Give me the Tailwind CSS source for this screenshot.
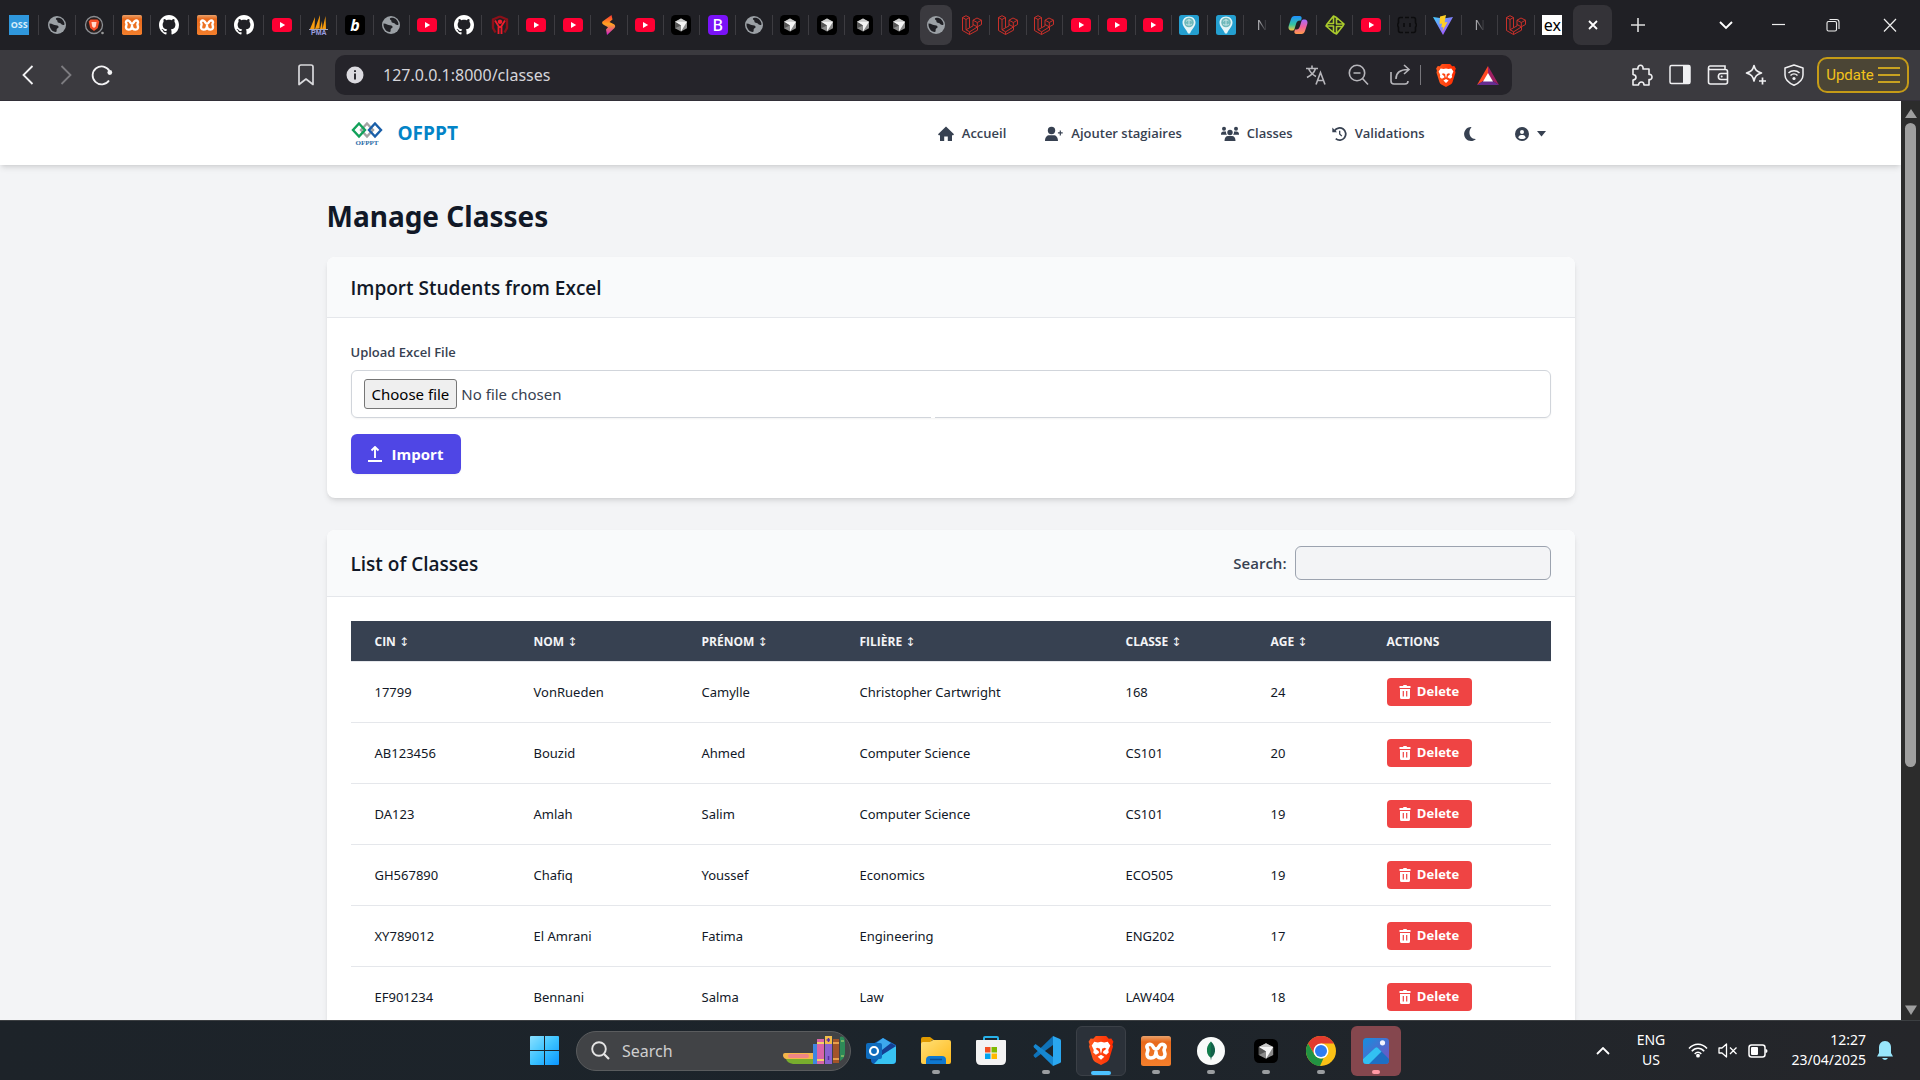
<!DOCTYPE html>
<html lang="en">
<head>
<meta charset="utf-8">
<meta name="viewport" content="width=device-width, initial-scale=1">
<title>Manage Classes</title>
<script src="https://cdn.jsdelivr.net/npm/@tailwindcss/browser@4"></script>
</head>
<body class="flex h-screen flex-col overflow-hidden bg-[#202025] font-['Noto_Sans','Open_Sans',sans-serif] text-[#111827]">

<svg class="absolute size-0" aria-hidden="true">
  <defs>
    <linearGradient id="gFlame" x1="0" y1="0" x2="0" y2="1"><stop offset="0" stop-color="#f33"/><stop offset=".45" stop-color="#ffa51f"/><stop offset="1" stop-color="#d11ad1"/></linearGradient>
    <linearGradient id="gVite" x1="0" y1="0" x2="1" y2="1"><stop offset="0" stop-color="#41d1ff"/><stop offset="1" stop-color="#bd34fe"/></linearGradient>
    <linearGradient id="gCopA" x1="0" y1="0" x2="0" y2="1"><stop offset="0" stop-color="#1e90ff"/><stop offset=".6" stop-color="#35c5a0"/><stop offset="1" stop-color="#f5c842"/></linearGradient>
    <linearGradient id="gCopB" x1="0" y1="0" x2="0" y2="1"><stop offset="0" stop-color="#a46bff"/><stop offset=".5" stop-color="#f0609e"/><stop offset="1" stop-color="#ff9a4a"/></linearGradient>
    <linearGradient id="gWin" x1="0" y1="0" x2="1" y2="1"><stop offset="0" stop-color="#8be0ff"/><stop offset=".5" stop-color="#3cc3ff"/><stop offset="1" stop-color="#0a95ff"/></linearGradient>
    <linearGradient id="gBrave" x1="0" y1="0" x2="1" y2="0"><stop offset="0" stop-color="#ff5b1f"/><stop offset="1" stop-color="#ff2a00"/></linearGradient>
    <linearGradient id="gFolder" x1="0" y1="0" x2="1" y2="1"><stop offset="0" stop-color="#ffe078"/><stop offset="1" stop-color="#ffb91a"/></linearGradient>
    <linearGradient id="gPhoto" x1="0" y1="0" x2="1" y2="1"><stop offset="0" stop-color="#1490df"/><stop offset="1" stop-color="#7a4fc0"/></linearGradient>
    <linearGradient id="gXampp" x1="0" y1="0" x2="0" y2="1"><stop offset="0" stop-color="#e8a26c"/><stop offset=".2" stop-color="#e8691c"/><stop offset="1" stop-color="#f47f2c"/></linearGradient>
    <symbol id="globe" viewBox="0 0 20 20"><circle cx="10" cy="10" r="9" fill="currentColor"/><path d="M2.500 8.500c3 .2 4.500 1.600 6.500 1.800 1.500.2 2.800.7 2.600 2-.2 1-1.600.9-1.900 2-.2 1 .3 2.200-.7 2.600C5 17 2.200 13 2.500 8.500ZM9.500 3c2-.6 4-.1 5.500 1.200 1.600 1.400 2.500 3.400 2.500 5.300-1.200 1-2.800.4-3.500-.7-.6-1-2-.6-3-1.300-.9-.6-.2-1.700-1-2.300C9 4.500 8.300 3.500 9.500 3Z" fill="#202025"/></symbol>
    <symbol id="yt" viewBox="0 0 20 20"><rect x="0" y="3" width="20" height="14" rx="3.500" fill="#ff0033"/><path d="M8 7l5.200 3L8 13Z" fill="#fff"/></symbol>
    <symbol id="gh" viewBox="0 0 16 16"><path fill="#fff" d="M8 0C3.580 0 0 3.580 0 8c0 3.540 2.290 6.530 5.470 7.590.4.070.55-.17.55-.38 0-.19-.01-.82-.01-1.490-2.010.37-2.530-.49-2.690-.94-.09-.23-.48-.94-.82-1.130-.28-.15-.68-.52-.01-.53.63-.01 1.080.58 1.230.82.72 1.210 1.870.87 2.330.66.070-.52.28-.87.51-1.070-1.780-.2-3.640-.89-3.640-3.950 0-.87.31-1.590.82-2.150-.08-.2-.36-1.020.08-2.120 0 0 .67-.21 2.200.82.64-.18 1.320-.27 2-.27s1.360.09 2 .27c1.530-1.040 2.200-.82 2.200-.82.44 1.100.16 1.920.08 2.120.51.56.82 1.270.82 2.150 0 3.070-1.870 3.750-3.650 3.950.29.25.54.73.54 1.480 0 1.070-.01 1.930-.01 2.200 0 .21.15.46.55.38A8.010 8.010 0 0 0 16 8c0-4.420-3.580-8-8-8Z"/></symbol>
    <symbol id="xampp" viewBox="0 0 30 30"><rect width="30" height="30" rx="2.500" fill="url(#gXampp)"/><path d="M9.800 8.500c-3.200-.8-4.800 1.800-3.300 4 .6 1 .6 1.800.1 3-1.700 4 .2 6.500 3.200 6.500 3.400 0 5.200-2.200 5.200-6M20.200 8.500c3.200-.8 4.800 1.800 3.300 4-.6 1-.6 1.800-.1 3 1.700 4-.2 6.500-3.200 6.500-3.400 0-5.200-2.200-5.200-6M9.800 8.500c2.700.5 2 4.500 5.200 4.500s2.500-4 5.200-4.500" fill="none" stroke="#fff" stroke-width="3.600" stroke-linecap="round"/></symbol>
    <symbol id="brave" viewBox="0 0 24 28"><path d="M7 0h10l2.500 2.600L22 2.400l2 3.100-1 2.700.6 2L20 22c-.5 1.600-1.200 2.200-2.400 3L12 28l-5.600-3C5.200 24.200 4.500 23.600 4 22L.4 10.200l.6-2L0 5.500l2-3.100 2.500.2L7 0Z" fill="url(#gBrave)"/><path d="M12 5.500l3 .7 3.500-.6 2.500 3.600-2 4.300.5 2.500-2.500 2L14 16.500l.2-1.700 3-2.600-1.700-.8-2.500.8-.3 2.500-.7 2.400-.7-2.400-.3-2.500-2.500-.8-1.700.8 3 2.600.2 1.700L7 18l-2.500-2L5 13.500 3 9.200l2.500-3.600 3.500.6 3-.7ZM12 18.200l3.200 1.900-3.200 2.900-3.200-2.900 3.200-1.900Z" fill="#fff"/></symbol>
    <symbol id="braveRing" viewBox="0 0 20 20"><circle cx="10" cy="10" r="8.500" fill="#2a2020" stroke="#8c8f94" stroke-width="1.300"/><path d="M6.500 4.500h7l1.800 2L13.800 13 10 16l-3.800-3L4.700 6.500Z" fill="#f4502a"/><path d="M7.500 7h5L11.800 11.500 10 13l-1.800-1.500Z" fill="#ffd8cc"/><circle cx="18.500" cy="18" r="1.300" fill="#999"/></symbol>
    <symbol id="pma" viewBox="0 0 20 20"><path d="M6 2 1 14h4.500ZM11 0 6 14l4.500-.5ZM13 6l-2 8h2.500ZM16.500 1l-3 13h3.500Z" fill="#f89c0e"/><path d="M0 14.500h19" stroke="#c9c9e0" stroke-width=".8"/><text x="2" y="19.800" font-size="7" font-weight="bold" font-family="Liberation Sans, sans-serif" fill="#9d9fe0">PMA</text></symbol>
    <symbol id="hood" viewBox="0 0 20 20"><path d="M10 1.500 17 4.500v8.500l-2.500 4.500M10 1.500 3 4.500v8.500l2.500 4.500" fill="none" stroke="#8c1019" stroke-width="2.400"/><circle cx="10" cy="6.800" r="2.200" fill="#ef1d2c"/><path d="M5 5.500 8.500 11v8M15 5.500 11.500 11v8M8.500 12h3" fill="none" stroke="#ef1d2c" stroke-width="1.800"/></symbol>
    <symbol id="flame" viewBox="0 0 20 20"><path d="M12.500 0 3.500 6.500c-1 1.500 0 2.500 1.500 3.500l4 2.300-2 2.200 1 5.500 7.500-7c1.200-1.500.8-2.800-.5-3.700L10.500 7l3-2.500Z" fill="url(#gFlame)"/></symbol>
    <symbol id="cursor" viewBox="0 0 20 20"><rect width="20" height="20" rx="4.500" fill="#000"/><path d="m10 3.500 6 3.200v6.600l-6 3.200-6-3.200V6.700Z" fill="#8b8b8b"/><path d="m10 3.500 6 3.200-6 1.300-6-1.300Z" fill="#c9c9c9"/><path d="M4 6.700 16 6.700 10 16.500V10.500Z" fill="#f4f4f4"/><path d="m4 6.700 6 3.800-6 2.800Z" fill="#555"/></symbol>
    <symbol id="laravel" viewBox="0 0 20 20"><path d="M.5 2.500 4 .7l3.500 1.800v10.300L11 10.900V5.200l4-2.200 4.500 2.200v4.300l-4 2.200v3.500L7.500 19.500.5 15.500ZM.5 2.500 4 4.500l3.500-2M4 4.500v10.300l3.500-2M4 14.800l3.700 2 7.600-4.800M7.600 17v2.500M11 5.200l4.300 2.300 4.200-2.300M15.300 7.500v4.300L11 9.500" fill="none" stroke="#c9302a" stroke-width="1" stroke-linejoin="round"/></symbol>
    <symbol id="pin" viewBox="0 0 20 20"><rect width="20" height="20" rx="2.500" fill="#249fd0"/><path d="M10 1.500c4 0 6.500 2.800 6.500 6 0 4-3.500 6-5.500 11h-2c-2-5-5.500-7-5.500-11 0-3.200 2.500-6 6.500-6Z" fill="#e4f5f7"/><circle cx="10" cy="7.500" r="4.800" fill="#70b9bb"/><path d="M7 6.500c1.500-2 4-2 5.500-.5M7 9c2 1.500 4 1.500 6 0M10 4v6" fill="none" stroke="#d7eeee" stroke-width=".8"/></symbol>
    <symbol id="copilot" viewBox="0 0 20 20"><path d="M6.500 1h5c2 0 2.500 1.500 2 3l-.5 1.500c-3 0-4 .5-5 3.500L6.500 14c-.3 1-1 1.500-2.500 1.500C1 15.500 0 13.500.7 11L3 4C3.600 2 4.800 1 6.500 1Z" fill="url(#gCopA)"/><path d="M13.500 19h-5c-2 0-2.500-1.500-2-3l.5-1.500c3 0 4-.5 5-3.500L13.500 6c.3-1 1-1.500 2.500-1.500 3 0 4 2 3.300 4.500L17 16c-.6 2-1.800 3-3.500 3Z" fill="url(#gCopB)"/></symbol>
    <symbol id="green" viewBox="0 0 20 20"><path d="M8.500 1v7.500H2.500ZM1 11h7.500v6.500ZM11.500 19v-7.500h6ZM19 9h-7.500V2.500ZM2.500 8.500 1 11M8.500 17.500l3 1.500M17.500 11.500 19 9M11.500 2.500 8.500 1" fill="none" stroke="#aacb2c" stroke-width="1.600" stroke-linejoin="round"/></symbol>
    <symbol id="faint" viewBox="0 0 20 20"><path d="M6 2.500H3.500C2 2.500 1.500 3 1.500 4.500v3L.5 10l1 2.500v3c0 1.500.5 2 2 2H6M14 2.500h2.500c1.500 0 2 .5 2 2v3l1 2.500-1 2.500v3c0 1.500-.5 2-2 2H14M7 8v4M13 8v4M8 2.500h4M8 17.500h4" fill="none" stroke="#0c0c0e" stroke-width="1.600"/></symbol>
    <symbol id="vite" viewBox="0 0 20 20"><path d="m0 2 10 18L20 2l-9.500 1.500Z" fill="url(#gVite)"/><path d="m13 0-6 1.500-.5 7.500 2.500-.5-.7 4 2-.6-1 4.600L14.500 7l-3 .5L13 0Z" fill="#ffcf24"/></symbol>
  </defs>
</svg>

<!-- Browser tab strip -->
<header class="shrink-0">
  <div class="flex h-[50px] items-center bg-[#202025] pl-px">
    <div id="pinned" class="grid h-10 w-[300px] shrink-0 grid-cols-8"></div>
    <div id="tabs" class="grid h-10 w-[1270px] shrink-0 grid-cols-[repeat(35,minmax(0,1fr))]"></div>
    <button aria-label="Close tab" class="ml-0.5 flex h-10 w-[39px] shrink-0 items-center justify-center rounded-lg bg-[#343338]"><svg class="size-2.5" viewBox="0 0 10 10"><path d="m1 1 8 8M9 1 1 9" stroke="#fff" stroke-width="1.800"/></svg></button>
    <button aria-label="New tab" class="ml-[18px] flex size-4 items-center justify-center"><svg class="size-3.5" viewBox="0 0 14 14"><path d="M7 0v14M0 7h14" stroke="#ddd" stroke-width="1.600"/></svg></button>
    <div class="ml-auto flex items-center gap-[38px] pr-[23px]">
      <button aria-label="Search tabs"><svg class="h-4 w-3.5" viewBox="0 0 14 16"><path d="m1 5 6 6 6-6" fill="none" stroke="#fff" stroke-width="1.900"/></svg></button>
      <button aria-label="Minimise"><svg class="h-4 w-4" viewBox="0 0 16 16"><path d="M1 7.500h13" stroke="#eee" stroke-width="1.200"/></svg></button>
      <button aria-label="Restore"><svg class="h-4 w-4" viewBox="0 0 16 16"><rect x="2" y="4.500" width="9.500" height="9.500" rx="1.500" fill="none" stroke="#eee" stroke-width="1.100"/><path d="M4.500 2.500h7c1.500 0 2.500 1 2.500 2.500v7" fill="none" stroke="#eee" stroke-width="1.100"/></svg></button>
      <button aria-label="Close window" class="pl-1"><svg class="h-4 w-3.5" viewBox="0 0 14 16"><path d="m1 2 12 12.500M13 2 1 14.500" stroke="#eee" stroke-width="1.200"/></svg></button>
    </div>
  </div>

  <!-- Toolbar -->
  <div class="flex h-[51px] items-center border-b border-[#322f38] bg-[#3b3a3f] pr-[11px] pl-4 text-[#e8e8ec]">
    <button aria-label="Back" class="flex w-6 justify-center"><svg class="h-5 w-3" viewBox="0 0 12 20"><path d="m10.500 1-9 9 9 9" fill="none" stroke="#f3f3f5" stroke-width="1.800"/></svg></button>
    <button aria-label="Forward" class="ml-3.5 flex w-6 justify-center"><svg class="h-5 w-3" viewBox="0 0 12 20"><path d="m1.500 1 9 9-9 9" fill="none" stroke="#7d7c81" stroke-width="1.800"/></svg></button>
    <button aria-label="Reload" class="ml-3 flex w-6 justify-center"><svg class="size-[22px]" viewBox="0 0 22 22"><path d="M18 16.500A9 9 0 1 1 18.500 7" fill="none" stroke="#f3f3f5" stroke-width="1.800"/><circle cx="18.800" cy="8.500" r="2.400" fill="#f3f3f5"/></svg></button>
    <button aria-label="Bookmark" class="ml-[182px] flex w-[20px] justify-center"><svg class="h-[22px] w-4" viewBox="0 0 16 22"><path d="M1 3c0-1.300.7-2 2-2h10c1.300 0 2 .7 2 2v17.500l-7-5.500-7 5.500Z" fill="none" stroke="#d9d9dc" stroke-width="1.700" stroke-linejoin="round"/></svg></button>
    <div class="ml-[19px] flex h-10 flex-1 items-center rounded-[10px] bg-[#25242a] pr-[13px] pl-[11px]">
      <svg class="size-[18px]" viewBox="0 0 18 18"><circle cx="9" cy="9" r="8.500" fill="#dcdbe0"/><path d="M9 4.200v1.900M9 7.500v6" stroke="#25242a" stroke-width="1.900"/></svg>
      <input type="text" aria-label="Address" value="127.0.0.1:8000/classes" class="ml-[19px] min-w-0 flex-1 bg-transparent text-base text-[#d5d5da] outline-none">
      <div class="flex items-center gap-[21px] text-[#b7b6bb]">
        <svg class="h-[22px] w-[22px]" viewBox="0 0 22 22"><path d="M1 4.500h12M7 1.500v3M10.500 4.500C9.500 8 6 11.500 2 13.500M3.500 4.500C5 8 8 11 11 12.500M11 20.500l4.500-12 4.500 12M12.500 16.500h6" fill="none" stroke="currentColor" stroke-width="1.600"/></svg>
        <svg class="h-[22px] w-[21px]" viewBox="0 0 21 22"><circle cx="9" cy="9" r="7.700" fill="none" stroke="currentColor" stroke-width="1.600"/><path d="M5.500 9h7M14.500 14.500l5.500 6" stroke="currentColor" stroke-width="1.600"/></svg>
        <svg class="h-[22px] w-[21px]" viewBox="0 0 21 22"><path d="M1 8v9c0 2 1 3 3 3h11c2 0 3-1 3-3M6 15c0-6 4-9.500 12-9.500M14 1l5 4.500-5 4.500" fill="none" stroke="currentColor" stroke-width="1.600"/></svg>
        <span class="-ml-3 h-5 w-px bg-[#77767b]"></span>
        <svg class="-ml-1.5 h-[23px] w-5"><use href="#brave"/></svg>
        <svg class="h-[19px] w-[22px]" viewBox="0 0 22 19"><path d="M11 0 0 19l11-7Z" fill="#ff4724"/><path d="M11 0l11 19-11-7Z" fill="#9e1f63"/><path d="m0 19 11-7 11 7Z" fill="#662d91"/><path d="m11 7 5 8.500H6Z" fill="#fff"/></svg>
      </div>
    </div>
    <div class="ml-[119px] flex items-center gap-4 text-[#f0f0f2]">
      <svg class="h-[22px] w-[22px]" viewBox="0 0 22 22"><path d="M2 5h5c-1-5 6-5 5 0h6v5.500c4-1 4 6 0 5V21h-5c0-4-5-4-5.500 0H2v-5c4-.5 4-5 0-5.500Z" fill="none" stroke="currentColor" stroke-width="1.600" stroke-linejoin="round"/></svg>
      <svg class="h-[22px] w-[22px]" viewBox="0 0 22 22"><rect x="1" y="1.500" width="20" height="18" rx="1.500" fill="none" stroke="currentColor" stroke-width="1.500"/><path d="M14 1.500h7v18h-7Z" fill="currentColor"/></svg>
      <svg class="h-[22px] w-[22px]" viewBox="0 0 22 22"><path d="M18 5.500V2H3C1 2 1 5.500 3 5.500h15.500c1.500 0 2 .5 2 2V18c0 1.500-.5 2-2 2h-15c-1.500 0-2-.5-2-2V4M21 9.500h-7c-3.500 0-3.500 6 0 6h7" fill="none" stroke="currentColor" stroke-width="1.600"/><circle cx="14.700" cy="12.500" r="1" fill="currentColor"/></svg>
      <svg class="h-[22px] w-[22px]" viewBox="0 0 22 22"><path d="M9 1.500c1.200 4.500 2.500 6 7.500 7.500-5 1.500-6.300 3-7.500 8-1.200-5-2.500-6.500-7.500-8C6.500 7.500 7.800 6 9 1.500Z" fill="none" stroke="currentColor" stroke-width="1.600" stroke-linejoin="round"/><path d="M17.500 13.500v7M14 17h7" stroke="currentColor" stroke-width="1.700"/></svg>
      <svg class="h-[22px] w-[22px]" viewBox="0 0 22 22"><path d="M11 1 2 4v7c0 5 4 8 9 10.300C16 19 20 16 20 11V4Z" fill="none" stroke="currentColor" stroke-width="1.500" stroke-linejoin="round"/><path d="M5.500 9c3-3 8-3 11 0M7.500 11.500c2-2 5-2 7 0" fill="none" stroke="currentColor" stroke-width="1.500"/><circle cx="11" cy="14.500" r="1.600" fill="currentColor"/></svg>
    </div>
    <button class="ml-3 flex h-9 w-[92px] items-center justify-center gap-1 rounded-[10px] border-2 border-[#c59b17] bg-[#4b4535] text-[15px] text-[#f3c21b] font-['Roboto']">Update<svg class="h-4 w-[22px]" viewBox="0 0 22 16"><path d="M0 1h22M0 8h22M0 15h22" stroke="currentColor" stroke-width="1.700"/></svg></button>
  </div>
</header>

<!-- Page viewport -->
<div class="flex min-h-0 flex-1">
  <div class="min-w-0 flex-1 overflow-hidden bg-[#f3f4f6]">
    <nav class="relative bg-white shadow-md">
      <div class="mx-auto flex h-16 max-w-7xl items-center justify-between px-10 pt-px">
        <a href="#" class="flex items-center gap-[15px] text-[19px] font-bold text-[#0284c7] font-['Open_Sans']">
          <svg class="h-6 w-8" viewBox="0 0 32 24"><g fill="none" stroke-width="2.400"><path d="m16 1.500 6 6.500-6 6.500L10 8Z" stroke="#a3a3a3"/><path d="m8 1.500 6 6.500-6 6.500L2 8Z" stroke="#12a15a"/><path d="m24 1.500 6 6.500-6 6.500L18 8Z" stroke="#1a5fa8"/></g><text x="4.500" y="23" font-size="7" font-family="Liberation Serif, serif" fill="#2a6ca8">OFPPT</text></svg>
          OFPPT
        </a>
        <div class="flex items-center gap-[39px] pr-[5px] text-[13px] font-semibold text-[#374151] font-['Open_Sans']">
          <a href="#" class="flex items-center gap-2"><svg class="h-4 w-4" viewBox="0 0 16 16" fill="currentColor"><path d="M8 .5 16 8.300 15.200 9.200H14V15H9.800v-4.500H6.200V15H2V9.200H.8L0 8.300Z"/></svg>Accueil</a>
          <a href="#" class="flex items-center gap-2"><svg class="h-4 w-[18px]" viewBox="0 0 18 16" fill="currentColor"><circle cx="6.500" cy="4.500" r="3.700"/><path d="M0 15c0-4 2-5.800 4.500-5.800h4C11 9.200 13 11 13 15ZM14.700 4.500h1.200v1.800h1.800v1.300h-1.800v1.800h-1.200V7.600h-1.800V6.300h1.800Z"/></svg>Ajouter stagiaires</a>
          <a href="#" class="flex items-center gap-2"><svg class="h-4 w-[18px]" viewBox="0 0 18 16" fill="currentColor"><circle cx="3" cy="2.800" r="2"/><circle cx="15" cy="2.800" r="2"/><circle cx="9" cy="6.500" r="2.700"/><path d="M0 8.200C0 6.300 1 5.500 2.500 5.500H5C5 7 5 7.500 6 8.700H0ZM18 8.200c0-1.900-1-2.700-2.500-2.700H13c0 1.500 0 2-1 3.200h6ZM3.500 15c0-3.500 1.500-5 3.500-5h4c2 0 3.500 1.500 3.500 5Z"/></svg>Classes</a>
          <a href="#" class="flex items-center gap-2"><svg class="h-4 w-[15px]" viewBox="0 0 16 16" fill="none" stroke="currentColor"><path d="M2.700 4.500A6.500 6.500 0 1 1 4 13" stroke-width="1.900"/><path d="M8.200 4.500V8l2.300 2.300" stroke-width="1.400"/><path d="M.3 1v5h5Z" fill="currentColor" stroke="none"/></svg>Validations</a>
          <button aria-label="Dark mode"><svg class="h-3.5 w-3" viewBox="0 0 12 14"><path d="M7 0a7 7 0 1 0 5 12C5.500 12.500 3.500 4.500 7.500.2Z" fill="currentColor"/></svg></button>
          <button aria-label="Account" class="flex items-center gap-2"><svg class="size-[14px]" viewBox="0 0 14 14"><circle cx="7" cy="7" r="7" fill="currentColor"/><circle cx="7" cy="5" r="2" fill="#fff"/><path d="M3.300 10.800c.3-2 1.500-2.800 2.700-2.800h2c1.200 0 2.400.8 2.700 2.800C9.500 12.500 4.500 12.500 3.300 10.800Z" fill="#fff"/></svg><svg class="h-1.5 w-[9px]" viewBox="0 0 9 6"><path d="M0 0h9L4.500 5.500Z" fill="currentColor"/></svg></button>
        </div>
      </div>
    </nav>

    <main class="mx-auto max-w-7xl px-4 pt-[33px]">
      <h1 class="mb-[23px] text-[28px] leading-9 font-bold">Manage Classes</h1>

      <section class="mb-8 rounded-lg bg-white shadow-md">
        <div class="rounded-t-lg border-b border-[#e5e7eb] bg-[#f9fafb] px-6 pt-[17px] pb-[15px]"><h2 class="text-[19px] leading-7 font-semibold font-['Open_Sans']">Import Students from Excel</h2></div>
        <form class="p-6">
          <span class="block text-[13px] leading-5 font-semibold text-[#374151] font-['Open_Sans']">Upload Excel File</span>
          <label for="file" class="relative mt-2 flex h-12 items-center gap-1 rounded-md border border-[#d1d5db] px-3 text-[15px] text-[#374151] shadow-xs">
            <span class="rounded-[3px] border border-[#767676] bg-[#efefef] px-[7px] leading-7 text-black">Choose file</span>
            <span>No file chosen</span>
            <span class="absolute -bottom-px left-[579px] h-0.5 w-1 bg-white"></span>
            <input id="file" type="file" class="sr-only">
          </label>
          <button type="button" class="mt-4 flex h-10 w-[110px] items-center justify-center gap-2.5 rounded-md bg-[#4f46e5] text-[15px] font-bold text-white shadow-xs font-['Open_Sans']"><svg class="h-4 w-3.5" viewBox="0 0 14 16"><path d="M0 15h14M7 12V1.500M3.500 4.500 7 1l3.500 3.500" fill="none" stroke="#fff" stroke-width="1.900"/></svg>Import</button>
        </form>
      </section>

      <section class="rounded-lg bg-white shadow-md">
        <div class="flex items-center justify-between rounded-t-lg border-b border-[#e5e7eb] bg-[#f9fafb] px-6 py-4">
          <h2 class="pt-0.5 text-[19px] leading-7 font-semibold font-['Open_Sans']">List of Classes</h2>
          <div class="flex items-center gap-2">
            <label for="search" class="text-[15px] font-semibold text-[#374151] font-['Open_Sans']">Search:</label>
            <input id="search" type="search" class="h-[34px] w-64 rounded-md border border-[#9ca3af] bg-[#f3f4f6] px-2">
          </div>
        </div>
        <div class="p-6">
          <table class="w-full table-fixed border-collapse text-left text-[13px]">
            <colgroup><col class="w-[159px]"><col class="w-[168px]"><col class="w-[158px]"><col class="w-[266px]"><col class="w-[145px]"><col class="w-[116px]"><col></colgroup>
            <thead>
              <tr id="head" class="h-10 bg-[#374151] text-xs text-[#f3f4f6] font-['Open_Sans','DejaVu_Sans']"></tr>
            </thead>
            <tbody id="rows"></tbody>
          </table>
        </div>
      </section>
    </main>
  </div>

  <!-- Page scrollbar -->
  <div class="flex w-[19px] shrink-0 flex-col items-center bg-[#2c2c2c] pt-1.5 pb-1">
    <svg class="h-3 w-3" viewBox="0 0 12 12"><path d="M6 2 12 11H0Z" fill="#9f9f9f"/></svg>
    <div class="mt-1 h-[644px] w-[11px] rounded-full bg-[#9f9f9f]"></div>
    <svg class="mt-auto h-3 w-3" viewBox="0 0 12 12"><path d="M0 1.500h12L6 11Z" fill="#9f9f9f"/></svg>
  </div>
</div>

<!-- Taskbar -->
<footer class="grid h-[60px] shrink-0 grid-cols-[1fr_auto_1fr] items-center border-t border-[#3c3f42] bg-linear-to-r from-[#1d2329] via-[#1c242b] to-[#25262a] text-white">
  <div></div>
  <div class="flex items-center gap-[5px]">
    <button aria-label="Start" class="flex size-[50px] items-center justify-center"><svg class="size-[29px]" viewBox="0 0 29 29"><path d="M1 0h13v14H0V1q0-1 1-1ZM15 0h13q1 0 1 1v13H15ZM0 15h14v14H1q-1 0-1-1ZM15 15h14v13q0 1-1 1H15Z" fill="url(#gWin)"/></svg></button>
    <label class="ml-0.5 flex h-10 w-[275px] items-center rounded-full border border-[#5a5c5e] bg-[#414346] pr-1 pl-3.5">
      <svg class="size-[19px] shrink-0" viewBox="0 0 19 19"><circle cx="8" cy="8" r="6.800" fill="none" stroke="#e4e4e4" stroke-width="1.900"/><path d="m13 13 5 5" stroke="#e4e4e4" stroke-width="2.200"/></svg>
      <input type="text" aria-label="Search" placeholder="Search" class="ml-3 min-w-0 flex-1 bg-transparent text-base text-white outline-none placeholder:text-[#cfcfcf]">
      <svg class="h-[30px] w-[63px] shrink-0" viewBox="0 0 63 30"><path d="M0 19q0-2 2-2h28v6H3q-3-1-3-4Z" fill="#f3b54a"/><rect x="5" y="18" width="21" height="4" rx="2" fill="#ef8585"/><path d="M3 23h27v5H10q-6-1-7-5Z" fill="#78ad2d"/><rect x="30" y="8" width="4" height="20" fill="#3e86e0"/><rect x="34" y="3" width="7" height="25" fill="#d964a8"/><path d="M34 7h7M34 24h7" stroke="#f4cf6a" stroke-width="2"/><rect x="42" y="0" width="7" height="28" fill="#8b63d0"/><path d="M42 0h7v8h-7Z" fill="#f3bd4b"/><path d="M43.500 4h3.500M45.500 2v4M45.500 20v4" stroke="#5b2f9f" stroke-width="1.500"/><rect x="50" y="3" width="6" height="24" fill="#a3542a"/><path d="M50 7h6M50 23h6" stroke="#e8a04c" stroke-width="2"/><path d="M57 1q5-2 5 6v10q0 5-5 8Z" fill="#2e8a58"/><path d="M58 5h3M58 20h3" stroke="#b9dd6c"/></svg>
    </label>
    <button aria-label="Outlook" class="flex size-[50px] items-center justify-center"><svg class="h-7 w-[31px]" viewBox="0 0 31 28"><path d="M5 8 17 1l13 7v16q0 3-3 3H9q-4 0-4-4Z" fill="#0e5fb8"/><path d="m9 7 8-6 13 8-12 8Z" fill="#3da9ee"/><path d="m18 16 12-7v14q0 4-4 4H8Z" fill="#38c3f2"/><path d="m30 9-14 9v-5l9-7Z" fill="#153f92"/><rect y="6" width="16" height="16" rx="2" fill="#0f6cbd"/><circle cx="8" cy="14" r="4" fill="none" stroke="#fff" stroke-width="2.200"/></svg></button>
    <button aria-label="File Explorer" class="relative flex size-[50px] items-center justify-center"><svg class="h-[27px] w-[30px]" viewBox="0 0 30 27"><path d="M0 2Q0 0 2 0h7l4 3h-2L9 7H0Z" fill="#e09a00"/><path d="M0 7q0-2 2-2h7l3-2h16q2 0 2 2v20q0 2-2 2H2q-2 0-2-2Z" fill="url(#gFolder)"/><path d="M5 27v-4q0-4 4-4h12q4 0 4 4v4Z" fill="#0f78d0"/><path d="M9 22.500h12" stroke="#0a4f97" stroke-width="1.500"/></svg><span class="absolute bottom-0.5 h-1 w-2 rounded-full bg-[#9a9da0]"></span></button>
    <button aria-label="Store" class="flex size-[50px] items-center justify-center"><svg class="h-[29px] w-[30px]" viewBox="0 0 30 29"><path d="M8 6V2q0-1 1-1h12q1 0 1 1v4" fill="none" stroke="#28b2ea" stroke-width="2"/><path d="M0 5q0-1 1-1h28q1 0 1 1v19q0 5-5 5H5q-5 0-5-5Z" fill="#f3f3f3"/><path d="M9 11h5.500v5.500H9Z" fill="#f25022"/><path d="M15.500 11H21v5.500h-5.500Z" fill="#7fba00"/><path d="M9 17.500h5.500V23H9Z" fill="#00a4ef"/><path d="M15.500 17.500H21V23h-5.500Z" fill="#ffb900"/></svg></button>
    <button aria-label="Visual Studio Code" class="relative flex size-[50px] items-center justify-center"><svg class="size-[30px]" viewBox="0 0 30 30"><path d="m22 0-19 18.500q-1 1 0 2l1.500 1.500 17.500-13Z" fill="#0f72b8"/><path d="M22 30 3 11.500q-1-1 0-2L4.500 8 22 21Z" fill="#1687d0"/><path d="M22 0l7 3q1 .5 1 1.500v21q0 1-1 1.500l-7 3Z" fill="#2aa7f0"/></svg><span class="absolute bottom-0.5 h-1 w-2 rounded-full bg-[#9a9da0]"></span></button>
    <button aria-label="Brave" class="relative flex size-[50px] items-center justify-center rounded-md border border-[#3b4047] bg-[#2b3139]"><svg class="h-[29px] w-[26px]"><use href="#brave"/></svg><span class="absolute bottom-0 h-1 w-5 rounded-full bg-[#4cc2ff]"></span></button>
    <button aria-label="XAMPP" class="relative flex size-[50px] items-center justify-center"><svg class="size-[30px]"><use href="#xampp"/></svg><span class="absolute bottom-0.5 h-1 w-2 rounded-full bg-[#9a9da0]"></span></button>
    <button aria-label="MongoDB" class="relative flex size-[50px] items-center justify-center"><svg class="size-7" viewBox="0 0 28 28"><circle cx="14" cy="14" r="14" fill="#f9fbfa"/><path d="M14 4.500c3 3 4.500 6 4 10-.4 3-2 5-3.500 6l-.5 3-.5-3C12 19.500 10.400 17.500 10 14.500c-.5-4 1-7 4-10Z" fill="#116149"/><path d="M14 4.500c-3 3-4.500 6-4 10 .4 3 2 5 3.500 6Z" fill="#13aa52" opacity=".4"/></svg><span class="absolute bottom-0.5 h-1 w-2 rounded-full bg-[#9a9da0]"></span></button>
    <button aria-label="Cursor" class="relative flex size-[50px] items-center justify-center"><svg class="size-6"><use href="#cursor"/></svg><span class="absolute bottom-0.5 h-1 w-2 rounded-full bg-[#9a9da0]"></span></button>
    <button aria-label="Chrome" class="relative flex size-[50px] items-center justify-center"><svg class="size-[30px]" viewBox="0 0 30 30"><circle cx="15" cy="15" r="15" fill="#fbc116"/><path d="M2 7.500A15 15 0 0 1 28 7.500H15l-6.500 11Z" fill="#e33b2e"/><path d="M2 7.500 8.500 18.700q3 4.500 9 3.500L14 30A15 15 0 0 1 2 7.500Z" fill="#229342"/><circle cx="15" cy="15" r="7.500" fill="#fff"/><circle cx="15" cy="15" r="6" fill="#2f7cf0"/></svg><span class="absolute bottom-0.5 h-1 w-2 rounded-full bg-[#9a9da0]"></span></button>
    <button aria-label="Photos" class="relative flex size-[50px] items-center justify-center rounded-md bg-[#85474e]"><svg class="size-[26px]" viewBox="0 0 26 26"><rect width="26" height="26" rx="3.500" fill="url(#gPhoto)"/><path d="M0 21 12 10q1.500-1.500 3 0L26 21v1.500q0 3.500-3.500 3.500h-19Q0 26 0 22.500Z" fill="#1d6fc4"/><path d="M0 21 12 10q1.500-1.500 3 0l3.500 3.500L6 26H3.500Q0 26 0 22.500Z" fill="#32c0f2"/><circle cx="19.500" cy="4.800" r="2.600" fill="#f2f4ff"/></svg><span class="absolute bottom-0.5 h-1 w-2 rounded-full bg-[#ff99a4]"></span></button>
  </div>
  <div class="flex items-center justify-end pr-[27px]">
    <svg class="h-2 w-3.5" viewBox="0 0 14 8"><path d="m1 7 6-6 6 6" fill="none" stroke="#fff" stroke-width="1.800"/></svg>
    <div class="ml-[26px] w-[30px] pb-0.5 text-center text-sm leading-5">ENG<br>US</div>
    <svg class="ml-[22px] h-[15px] w-5" viewBox="0 0 20 15"><g fill="none" stroke="#fff" stroke-width="1.500"><path d="M1 5.500C6-.2 14-.2 19 5.500M3.800 8.300c3.500-4 8.900-4 12.400 0M6.700 11c2-2.200 4.600-2.200 6.600 0"/></g><circle cx="10" cy="12.700" r="1.900" fill="#fff"/></svg>
    <svg class="ml-2.5 h-[15px] w-5" viewBox="0 0 20 15"><path d="M1 5h3l4.500-4v13L4 10H1ZM12 4.500l6.500 6.500M18.500 4.500 12 11" fill="none" stroke="#fff" stroke-width="1.300" stroke-linejoin="round"/></svg>
    <svg class="ml-2.5 h-[14px] w-5" viewBox="0 0 20 14"><rect x="1" y="1" width="16" height="12" rx="2.500" fill="none" stroke="#fff" stroke-width="1.500"/><rect x="3" y="3" width="7" height="8" rx="1" fill="#fff"/><path d="M17.500 5q2 0 2 2t-2 2Z" fill="#fff"/></svg>
    <div class="ml-[18px] w-20 pb-0.5 text-right text-sm leading-5 whitespace-nowrap">12:27<br>23/04/2025</div>
    <svg class="ml-[11px] h-5 w-4" viewBox="0 0 16 20"><path d="M8 0c4 0 6 3 6 6.500V12l2 3.500H0L2 12V6.500C2 3 4 0 8 0ZM5 17h6q-3 4-6 0Z" fill="#98e6fb"/></svg>
  </div>
</footer>

<script>
const icon = {
  oss: '<span class="flex size-5 items-center justify-center bg-[#2f97dc] text-[9px] font-bold text-[#d8edfa]">OSS</span>',
  b: '<span class="flex size-5 items-center justify-center rounded bg-black text-base leading-none font-bold text-white italic">b</span>',
  B: '<span class="flex size-5 items-center justify-center rounded-sm bg-[#7a12f8] text-base leading-none font-medium text-white">B</span>',
  N: '<span class="bg-linear-to-r from-[#d0d0d4] to-transparent bg-clip-text text-sm text-transparent">N</span>',
  ex: '<span class="flex size-5 items-center justify-center bg-white text-base leading-none text-black">ex</span>'
};
const svg = n => icon[n] || `<svg class="size-5 text-[#9ba0a5]"><use href="#${n}"/></svg>`;
const tab = (n, i, all) => n === 'active'
  ? `<button aria-label="Current tab" class="flex items-center justify-center"><span class="flex h-10 w-8 shrink-0 items-center justify-center rounded-lg bg-[#3b3a3f]">${svg('globe')}</span></button>`
  : `<button aria-label="Tab" class="flex items-center"><span class="flex flex-1 justify-center">${svg(n)}</span><span class="h-5 w-px ${all[i + 1] === 'active' || n === 'ex' ? 'bg-transparent' : 'bg-[#3d3c41]'}"></span></button>`;
const put = (id, list) => document.getElementById(id).innerHTML = list.split(' ').map(tab).join('');
put('pinned', 'oss globe braveRing xampp gh xampp gh yt');
put('tabs', 'pma b globe yt gh hood yt yt flame yt cursor B globe cursor cursor cursor cursor active laravel laravel laravel yt yt yt pin pin N copilot green yt faint vite N laravel ex');

document.getElementById('head').innerHTML = ['CIN', 'NOM', 'PRÉNOM', 'FILIÈRE', 'CLASSE', 'AGE', 'ACTIONS']
  .map(h => `<th class="px-6 pt-0.5 font-bold">${h}${h === 'ACTIONS' ? '' : ' <span class="font-normal">↕</span>'}</th>`).join('');

const trash = '<svg class="h-3.5 w-3" viewBox="0 0 12 14"><path d="M4 1 4.500 0h3L8 1h3.500v2H.5V1ZM1 4h10v8.500q0 1.500-1.500 1.500h-7Q1 14 1 12.500Z" fill="#fff"/><path d="M4.300 6v5.500M7.700 6v5.500" stroke="#ef4444" stroke-width="1.200"/></svg>';
document.getElementById('rows').innerHTML = [
  ['17799', 'VonRueden', 'Camylle', 'Christopher Cartwright', '168', '24'],
  ['AB123456', 'Bouzid', 'Ahmed', 'Computer Science', 'CS101', '20'],
  ['DA123', 'Amlah', 'Salim', 'Computer Science', 'CS101', '19'],
  ['GH567890', 'Chafiq', 'Youssef', 'Economics', 'ECO505', '19'],
  ['XY789012', 'El Amrani', 'Fatima', 'Engineering', 'ENG202', '17'],
  ['EF901234', 'Bennani', 'Salma', 'Law', 'LAW404', '18']
].map(r => `<tr class="h-[61px] border-t border-[#e5e7eb]">${r.map(c => `<td class="px-6 pt-0.5">${c}</td>`).join('')}<td class="px-6"><button class="flex h-7 w-[85px] items-center justify-center gap-1.5 rounded bg-[#ef4444] text-[13px] font-bold text-white font-['Open_Sans']">${trash}Delete</button></td></tr>`).join('');
</script>
</body>
</html>
